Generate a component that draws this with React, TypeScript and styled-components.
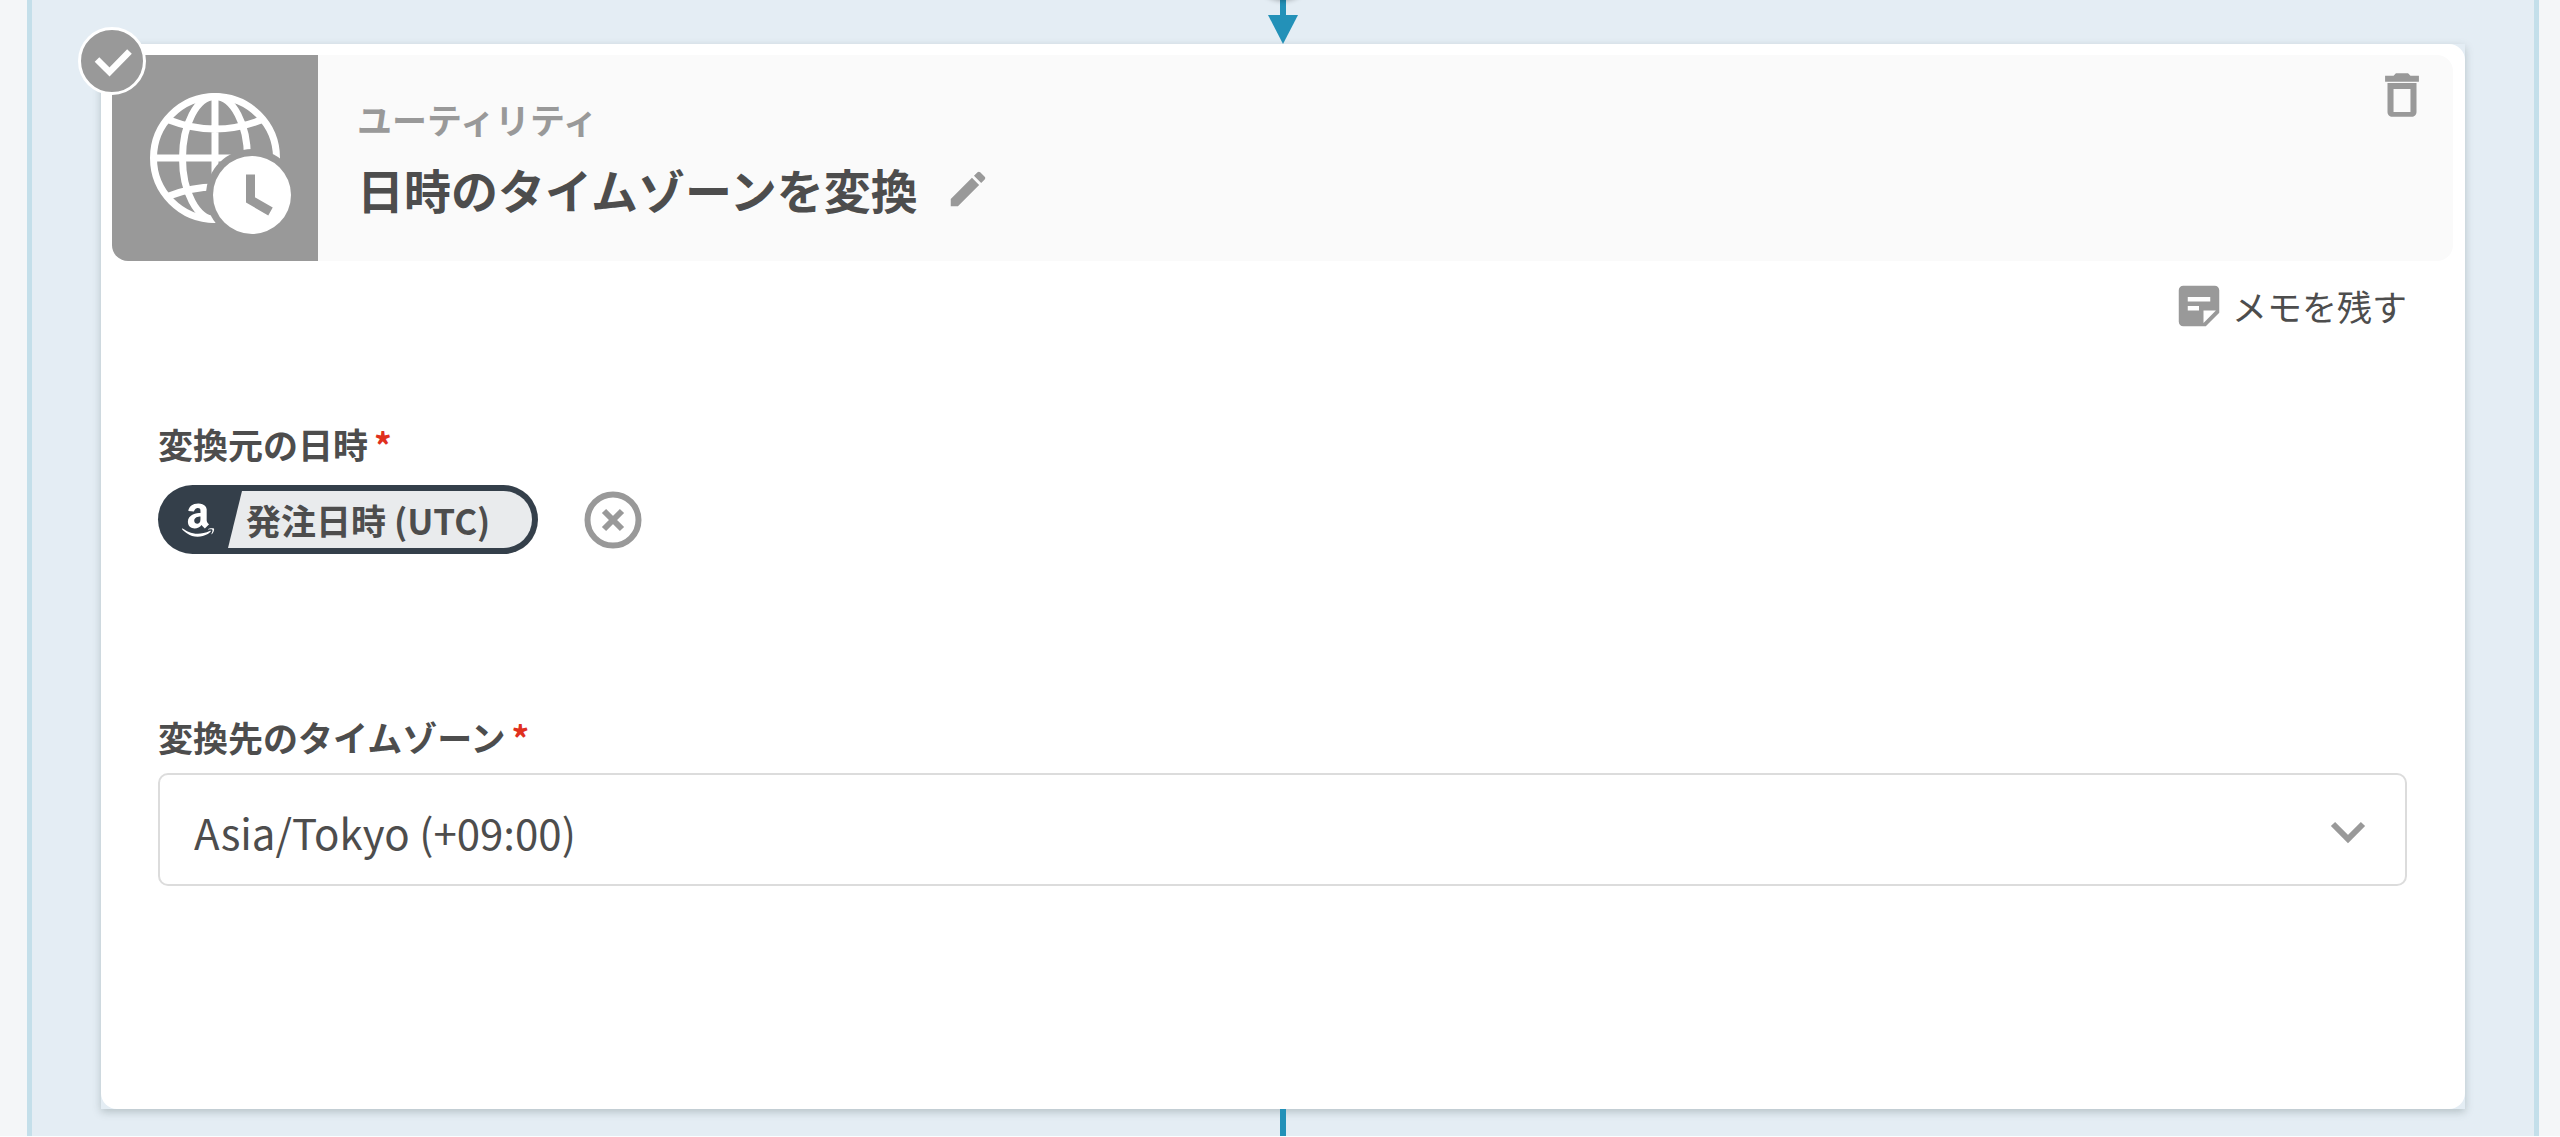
import React from "react";
import styled, { createGlobalStyle } from "styled-components";
import { FaAmazon } from "react-icons/fa";

const color = {
  text: "#4d4d4d",
  muted: "#999999",
  line: "#dcdcdc",
  accent: "#2391b8",
  lane: "#e4edf4",
  laneEdge: "#c4dfea",
  amazon: "#343f4a",
  required: "#e0301e",
};

const GlobalStyle = createGlobalStyle`
  *, *::before, *::after { box-sizing: border-box; }
  html { background: #fdfdfe; }
  body {
    margin: 0;
    color: ${color.text};
    font-family: "Noto Sans CJK JP", "Noto Sans", sans-serif;
    font-size: 35px;
    line-height: 52px;
  }
`;

const Page = styled.main`
  padding: 0 21px 0 27px;
  background: #f4f6f8;
  overflow: hidden;
`;

const Lane = styled.section`
  display: flex;
  flex-direction: column;
  align-items: stretch;
  padding: 0 69px;
  background: ${color.lane};
  border: solid ${color.laneEdge};
  border-width: 0 5px;
`;

const Connector = styled.div<{ $height: number }>`
  position: relative;
  display: flex;
  flex-direction: column;
  align-items: center;
  height: ${(p) => p.$height}px;
`;

const ConnectorLine = styled.span`
  flex: 1;
  width: 6px;
  background: ${color.accent};
`;

const ArrowHead = styled.span`
  border: solid transparent;
  border-width: 29px 15px 0;
  border-top-color: ${color.accent};
`;

const NodeShadow = styled.span`
  position: absolute;
  bottom: 100%;
  width: 56px;
  height: 56px;
  border-radius: 50%;
  box-shadow: 0 1px 5px rgba(0, 0, 0, 0.3);
`;

const CardFrame = styled.div`
  position: relative;
  background: ${color.lane};
  box-shadow: 0 3px 8px rgba(50, 70, 70, 0.26);
`;

const Card = styled.article`
  padding: 11px 12px 223px 11px;
  background: #ffffff;
  border-radius: 16px;
`;

const StatusBadge = styled.span`
  position: absolute;
  top: -17px;
  left: -23px;
  display: flex;
  width: 68px;
  height: 68px;
  background: ${color.muted};
  border: 3px solid #ffffff;
  border-radius: 50%;
`;

const Header = styled.header`
  display: flex;
  background: #fafafa;
  border-radius: 16px;
  overflow: hidden;
`;

const AppTile = styled.div`
  display: flex;
  width: 206px;
  height: 206px;
  background: ${color.muted};
`;

const Heading = styled.div`
  flex: 1;
  padding: 38px 0 0 39px;
`;

const Category = styled.p`
  margin: 0;
  color: ${color.muted};
  font-weight: 700;
`;

const TitleRow = styled.div`
  display: flex;
  align-items: center;
  gap: 27px;
  margin-top: 10px;
`;

const Title = styled.h1`
  margin: 0;
  font-size: 47px;
  line-height: 68px;
  font-weight: 700;
`;

const IconButton = styled.button`
  display: flex;
  align-self: center;
  padding: 0;
  color: ${color.muted};
  background: none;
  border: 0;
  cursor: pointer;
`;

const HeaderActions = styled.div`
  display: flex;
  align-items: flex-start;
  padding: 11px 22px 0 0;

  ${IconButton} { align-self: flex-start; }
`;

const Body = styled.div`
  padding: 19px 46px 0;
`;

const MemoRow = styled.div`
  display: flex;
  justify-content: flex-end;
  align-items: center;
  height: 52px;
`;

const MemoButton = styled.button`
  display: flex;
  align-items: center;
  gap: 6px;
  padding: 0;
  color: inherit;
  font: inherit;
  background: none;
  border: 0;
  cursor: pointer;

  svg { color: ${color.muted}; }
`;

const Field = styled.div<{ $before: number }>`
  display: flex;
  flex-direction: column;
  margin-top: ${(p) => p.$before}px;
`;

const labelText = `
  display: flex;
  gap: 6px;
  font-weight: 700;
`;

const FieldName = styled.div`${labelText}`;
const FieldLabel = styled.label`${labelText}`;

const Required = styled.span`
  color: ${color.required};
`;

const ChipRow = styled.div`
  display: flex;
  align-items: center;
  gap: 46px;
  margin-top: 15px;
`;

const Chip = styled.div`
  display: flex;
  height: 69px;
  padding: 6px;
  background: ${color.amazon};
  border-radius: 35px;
`;

const ChipIcon = styled.span`
  display: flex;
  align-items: center;
  justify-content: center;
  width: 64px;
  padding-left: 4px;
  color: #ffffff;
`;

const ChipText = styled.span`
  padding: 2px 42px 0 18px;
  line-height: 54px;
  font-weight: 700;
  background: #e9ebed;
  border-radius: 0 29px 29px 0;
  clip-path: polygon(14px 0, 100% 0, 100% 100%, 0 100%);
`;

const SelectBox = styled.div`
  display: grid;
  align-items: center;
  margin-top: 10px;

  > * { grid-area: 1 / 1; }

  > svg {
    justify-self: end;
    margin-right: 30px;
    color: ${color.muted};
    pointer-events: none;
  }
`;

const Select = styled.select`
  width: 100%;
  height: 113px;
  padding: 4px 100px 0 34px;
  appearance: none;
  color: inherit;
  font: inherit;
  font-size: 42px;
  line-height: 64px;
  background: #ffffff;
  border: 2px solid ${color.line};
  border-radius: 10px;
`;

const CheckIcon = () => (
  <svg width="62" height="62" viewBox="0 0 62 62" aria-hidden="true">
    <path d="M16 29.500 L28.500 42 L48.500 21.500" fill="none" stroke="#fff" strokeWidth="6.500" />
  </svg>
);

const GlobeClockIcon = () => (
  <svg width="206" height="206" viewBox="0 0 206 206" aria-hidden="true">
    <defs>
      <mask id="clock-gap">
        <rect width="206" height="206" fill="#fff" />
        <circle cx="140" cy="140" r="46" fill="#000" />
      </mask>
    </defs>
    <g fill="none" stroke="#fff" strokeWidth="7" mask="url(#clock-gap)">
      <circle cx="103" cy="103" r="61.500" />
      <ellipse cx="103" cy="103" rx="32.500" ry="61.500" />
      <path d="M103 42v122M42 103h122M57 65q46 18 92 0M57 141q46 -18 92 0" />
    </g>
    <circle cx="140" cy="140" r="39" fill="#fff" />
    <path d="M138.500 119.500v25.500l20 11.500" fill="none" stroke={color.muted} strokeWidth="9" />
  </svg>
);

const MaterialIcon = ({ size, d }: { size: number; d: string }) => (
  <svg width={size} height={size} viewBox="0 0 24 24" fill="currentColor" aria-hidden="true">
    <path d={d} />
  </svg>
);

const icons = {
  pencil:
    "M3 17.25V21h3.750L17.810 9.940l-3.750-3.750L3 17.250zM20.710 7.040a1 1 0 0 0 0-1.410l-2.340-2.340a1 1 0 0 0-1.410 0l-1.830 1.830 3.750 3.750 1.830-1.830z",
  trash:
    "M6 19c0 1.100.9 2 2 2h8c1.100 0 2-.9 2-2V7H6v12zM8.500 9.500h7v9.500h-7zM15.500 4l-1-1h-5l-1 1H5v2.500h14V4h-3.500z",
  note:
    "M19 3H4.990C3.890 3 3 3.900 3 5l.01 14c0 1.100.89 2 1.990 2h10l6-6V5c0-1.100-.9-2-2-2zM7 8h10v2H7V8zm5 6H7v-2h5v2zm2 5.500V14h5.500L14 19.500z",
};

const ClearIcon = () => (
  <svg width="58" height="58" viewBox="0 0 58 58" fill="none" stroke="currentColor" aria-hidden="true">
    <circle cx="29" cy="29" r="25.500" strokeWidth="6" />
    <path d="M20 20l18 18M38 20l-18 18" strokeWidth="6" />
  </svg>
);

const ChevronIcon = () => (
  <svg width="58" height="58" viewBox="0 0 58 58" fill="none" stroke="currentColor" aria-hidden="true">
    <path d="M14 23l15 15l15 -15" strokeWidth="6" />
  </svg>
);

export default function App() {
  return (
    <>
      <GlobalStyle />
      <Page>
        <Lane>
          <Connector $height={44}>
            <NodeShadow />
            <ConnectorLine />
            <ArrowHead />
          </Connector>
          <CardFrame>
            <Card>
              <Header>
                <AppTile>
                  <GlobeClockIcon />
                </AppTile>
                <Heading>
                  <Category>ユーティリティ</Category>
                  <TitleRow>
                    <Title>日時のタイムゾーンを変換</Title>
                    <IconButton type="button" aria-label="名前を編集">
                      <MaterialIcon size={46} d={icons.pencil} />
                    </IconButton>
                  </TitleRow>
                </Heading>
                <HeaderActions>
                  <IconButton type="button" aria-label="削除">
                    <MaterialIcon size={58} d={icons.trash} />
                  </IconButton>
                </HeaderActions>
              </Header>
              <Body>
                <MemoRow>
                  <MemoButton type="button">
                    <MaterialIcon size={54} d={icons.note} />
                    メモを残す
                  </MemoButton>
                </MemoRow>
                <Field $before={86}>
                  <FieldName>
                    変換元の日時<Required>*</Required>
                  </FieldName>
                  <ChipRow>
                    <Chip>
                      <ChipIcon>
                        <FaAmazon size={38} />
                      </ChipIcon>
                      <ChipText>発注日時 (UTC)</ChipText>
                    </Chip>
                    <IconButton type="button" aria-label="値をクリア">
                      <ClearIcon />
                    </IconButton>
                  </ChipRow>
                </Field>
                <Field $before={157}>
                  <FieldLabel htmlFor="timezone">
                    変換先のタイムゾーン<Required>*</Required>
                  </FieldLabel>
                  <SelectBox>
                    <Select id="timezone" defaultValue="Asia/Tokyo">
                      <option value="Asia/Tokyo">Asia/Tokyo (+09:00)</option>
                    </Select>
                    <ChevronIcon />
                  </SelectBox>
                </Field>
              </Body>
            </Card>
            <StatusBadge>
              <CheckIcon />
            </StatusBadge>
          </CardFrame>
          <Connector $height={27}>
            <ConnectorLine />
          </Connector>
        </Lane>
      </Page>
    </>
  );
}
